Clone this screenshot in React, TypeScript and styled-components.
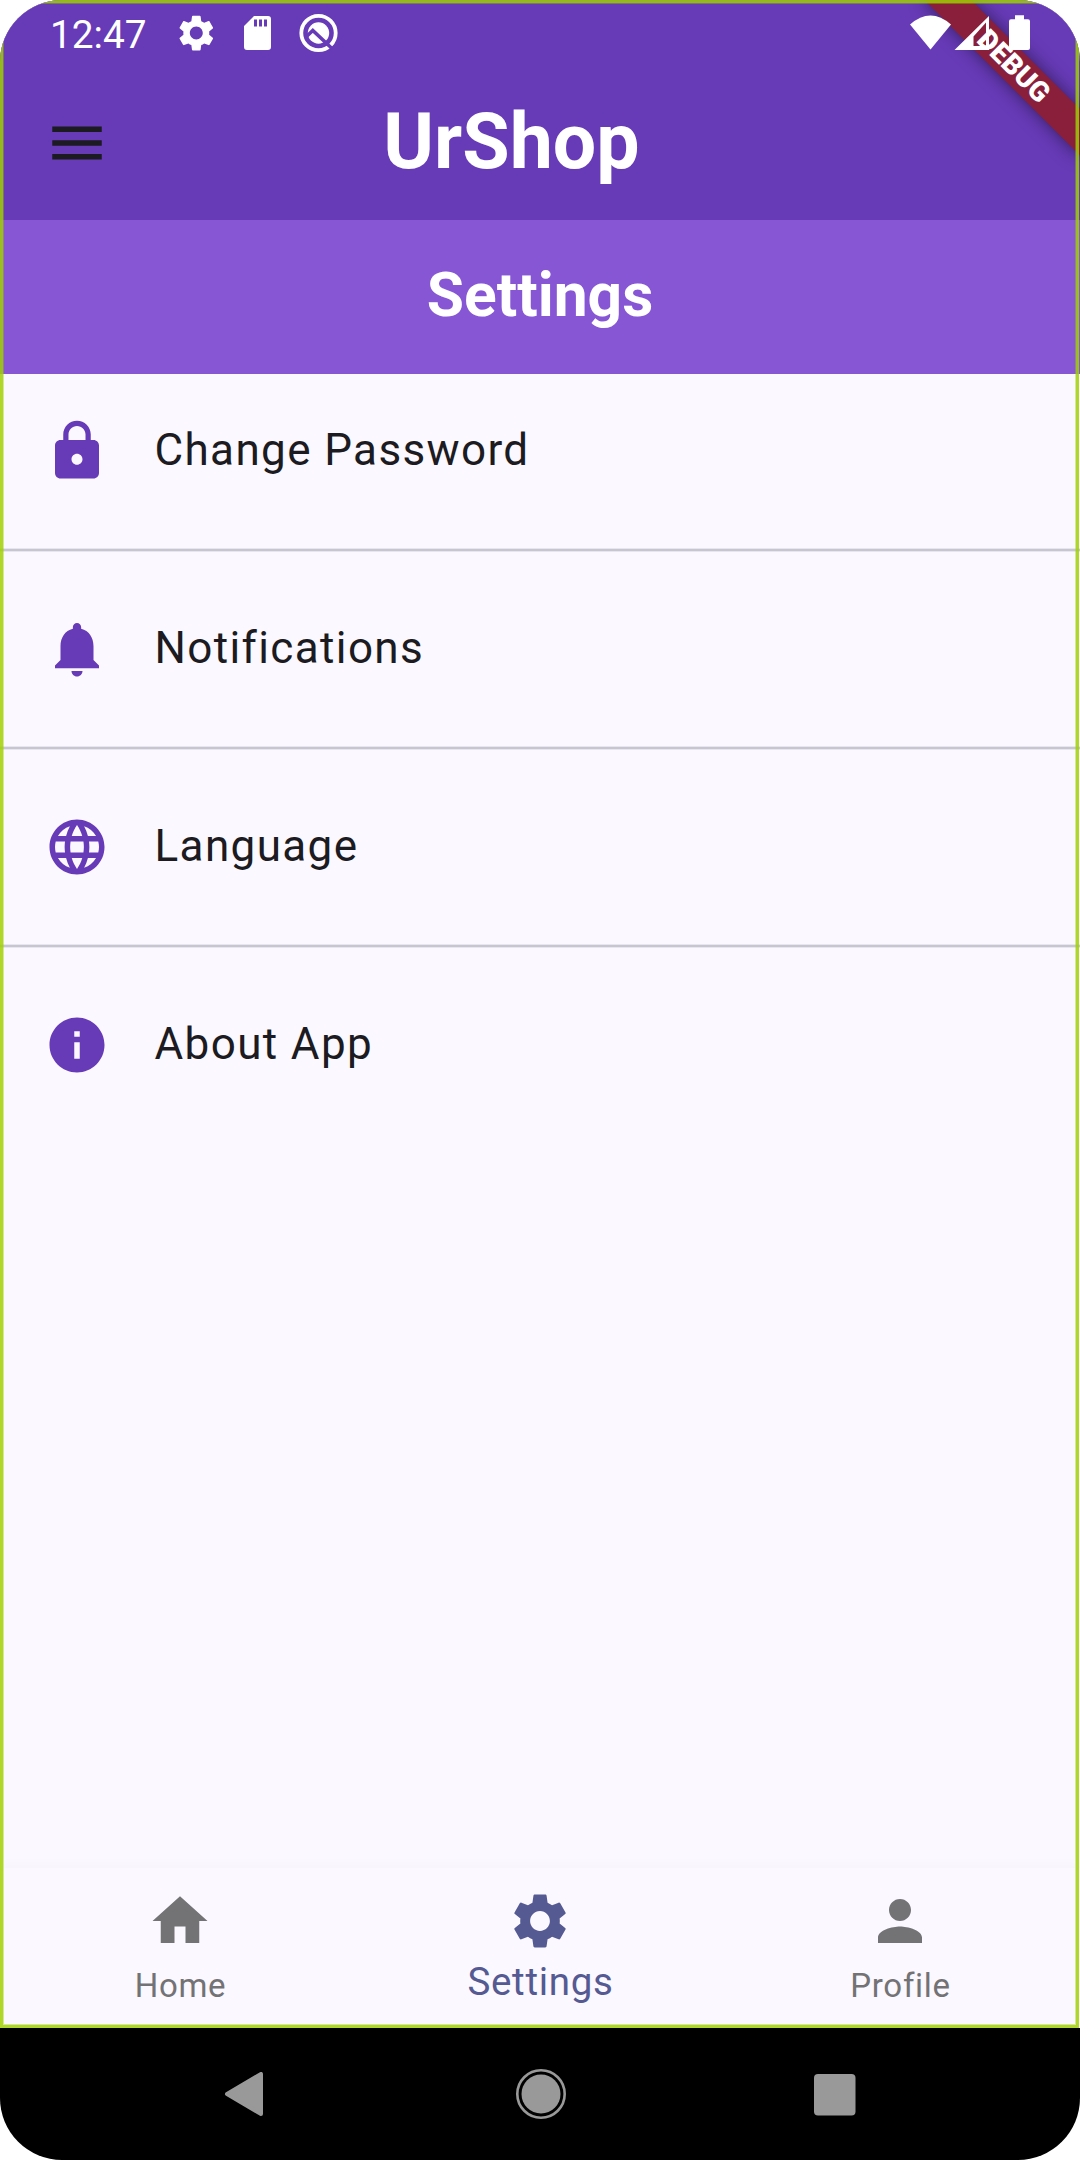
import React from 'react';
import styled, { createGlobalStyle } from 'styled-components';

const Global = createGlobalStyle`
  * { box-sizing: border-box; }
  html, body { margin: 0; background: #fff; }
  body { font-family: Roboto, "Liberation Sans", sans-serif; }
`;

const Device = styled.div`
  position: relative;
  width: 1080px;
  height: 2160px;
  overflow: hidden;
  border-radius: 62px;
  background: #000;
  display: flex;
  flex-direction: column;
`;

const AppSurface = styled.div`
  position: relative;
  height: 2028px;
  overflow: hidden;
  display: flex;
  flex-direction: column;
  background: #fbf8ff;
`;

const FocusOutline = styled.div`
  position: absolute;
  z-index: 3;
  inset: 0 1px 0 0;
  border: 3px solid rgba(158, 208, 0, 0.84);
  box-shadow: inset 0 0 0 1px rgba(158, 208, 0, 0.4);
  pointer-events: none;
`;

const StatusBar = styled.div`
  height: 66px;
  padding: 0 48px 0 50px;
  display: flex;
  align-items: center;
  justify-content: space-between;
  background: #673ab7;
  color: #fff;
`;

const StatusGroup = styled.div`
  position: relative;
  z-index: 2;
  display: flex;
  align-items: center;
`;

const Clock = styled.span`
  width: 125px;
  font-size: 38.8px;
  line-height: 66px;
  padding-top: 3px;
`;

const AppBar = styled.header`
  height: 154px;
  padding: 0 44px;
  display: flex;
  align-items: center;
  background: #673ab7;
`;

const AppTitle = styled.h1`
  flex: 1;
  margin: 0 123px 2px 0;
  text-align: center;
  color: #fff;
  font-size: 77px;
  font-weight: 700;
  line-height: 90px;
`;

const SectionHeader = styled.h2`
  margin: 0;
  height: 154px;
  padding-bottom: 3px;
  display: flex;
  align-items: center;
  justify-content: center;
  background: #8756d5;
  color: #fff;
  font-size: 60.5px;
  font-weight: 700;
`;

const List = styled.ul`
  flex: 1;
  margin: 0;
  padding: 0;
  list-style: none;
`;

const ListRow = styled.li`
  height: 154px;
  padding: 0 44px;
  display: flex;
  align-items: center;
  gap: 44.5px;
  color: #1b1b21;
  font-size: 44px;
  line-height: 66px;
  letter-spacing: 1.375px;
`;

const RowLabel = styled.span`
  padding-bottom: 2px;
`;

const Divider = styled.li`
  height: 44px;
  display: flex;
  align-items: center;
  &::before {
    content: '';
    flex: 1;
    height: 2px;
    background: #c7c5d0;
    box-shadow: 0 0 0 1px rgba(199, 197, 208, 0.38);
  }
`;

const BottomBar = styled.nav`
  height: 160px;
  display: grid;
  grid-template-columns: repeat(3, 1fr);
  background: #fbf8ff;
  box-shadow: 0 -3px 12px rgba(0, 0, 0, 0.025);
`;

const Tab = styled.div<{ $active?: boolean }>`
  display: flex;
  flex-direction: column;
  align-items: center;
  padding-top: 20px;
  color: ${(p) => (p.$active ? '#555a92' : '#737376')};
  font-size: ${(p) => (p.$active ? 38.5 : 33)}px;
  letter-spacing: 0.69px;
`;

const TabLabel = styled.span<{ $active?: boolean }>`
  line-height: ${(p) => (p.$active ? 56 : 64)}px;
  padding-left: 1px;
`;

const SystemBar = styled.div`
  height: 132px;
  display: flex;
  align-items: center;
  justify-content: space-between;
  padding: 0 215px 0 224px;
`;

const BannerCorner = styled.div`
  position: absolute;
  z-index: 1;
  top: 0;
  right: 0;
  width: 0;
  height: 0;
  transform: rotate(45deg);
`;

const DebugBanner = styled.div`
  position: absolute;
  left: -110px;
  top: 77px;
  width: 220px;
  height: 33px;
  background: #8a1f3b;
  box-shadow: 0 0 17px rgba(0, 0, 0, 0.5);
  color: #fff;
  font-size: 28px;
  font-weight: 900;
  line-height: 33px;
  text-align: center;
`;

const Glyph = styled.svg<{ $size?: number }>`
  display: block;
  flex: none;
  width: ${(p) => p.$size ?? 66}px;
  height: ${(p) => p.$size ?? 66}px;
  fill: currentColor;
`;

const paths = {
  menu: 'M3 18h18v-2H3v2zm0-5h18v-2H3v2zm0-7v2h18V6H3z',
  lock: 'M18 8h-1V6c0-2.76-2.24-5-5-5S7 3.24 7 6v2H6c-1.1 0-2 .9-2 2v10c0 1.1.9 2 2 2h12c1.1 0 2-.9 2-2V10c0-1.1-.9-2-2-2zm-6 9c-1.1 0-2-.9-2-2s.9-2 2-2 2 .9 2 2-.9 2-2 2zm3.1-9H8.9V6c0-1.71 1.39-3.1 3.1-3.1 1.71 0 3.1 1.39 3.1 3.1v2z',
  bell: 'M12 22c1.1 0 2-.9 2-2h-4c0 1.1.89 2 2 2zm6-6v-5c0-3.07-1.64-5.64-4.5-6.32V4c0-.83-.67-1.5-1.5-1.5s-1.5.67-1.5 1.5v.68C7.63 5.36 6 7.92 6 11v5l-2 2v1h16v-1l-2-2z',
  globe:
    'M11.99 2C6.47 2 2 6.48 2 12s4.47 10 9.99 10C17.52 22 22 17.52 22 12S17.52 2 11.99 2zm6.93 6h-2.95c-.32-1.25-.78-2.45-1.38-3.56 1.84.63 3.37 1.91 4.33 3.56zM12 4.04c.83 1.2 1.48 2.53 1.91 3.96h-3.82c.43-1.43 1.08-2.76 1.91-3.96zM4.26 14C4.1 13.36 4 12.69 4 12s.1-1.36.26-2h3.38c-.08.66-.14 1.32-.14 2s.06 1.34.14 2H4.26zm.82 2h2.95c.32 1.25.78 2.45 1.38 3.56-1.84-.63-3.37-1.9-4.33-3.56zm2.95-8H5.08c.96-1.66 2.49-2.93 4.33-3.56C8.81 5.55 8.35 6.75 8.03 8zM12 19.96c-.83-1.2-1.48-2.53-1.91-3.96h3.82c-.43 1.43-1.08 2.76-1.91 3.96zM14.34 14H9.66c-.09-.66-.16-1.32-.16-2s.07-1.35.16-2h4.68c.09.65.16 1.32.16 2s-.07 1.34-.16 2zm.25 5.56c.6-1.11 1.06-2.31 1.38-3.56h2.95c-.96 1.65-2.49 2.93-4.33 3.56zM16.36 14c.08-.66.14-1.32.14-2s-.06-1.34-.14-2h3.38c.16.64.26 1.31.26 2s-.1 1.36-.26 2h-3.38z',
  info: 'M12 2C6.48 2 2 6.48 2 12s4.48 10 10 10 10-4.48 10-10S17.52 2 12 2zm1 15h-2v-6h2v6zm0-8h-2V7h2v2z',
  home: 'M10 20v-6h4v6h5v-8h3L12 3 2 12h3v8z',
  person:
    'M12 12c2.21 0 4-1.79 4-4s-1.79-4-4-4-4 1.79-4 4 1.79 4 4 4zm0 2c-2.67 0-8 1.34-8 4v2h16v-2c0-2.66-5.33-4-8-4z',
  settings:
    'M19.14 12.94c.04-.3.06-.61.06-.94 0-.32-.02-.64-.07-.94l2.03-1.58c.18-.14.23-.41.12-.61l-1.92-3.32c-.12-.22-.37-.29-.59-.22l-2.39.96c-.5-.38-1.03-.7-1.62-.94l-.36-2.54c-.04-.24-.24-.41-.48-.41h-3.84c-.24 0-.43.17-.47.41l-.36 2.54c-.59.24-1.13.57-1.62.94l-2.39-.96c-.22-.08-.47 0-.59.22L2.74 8.87c-.12.21-.08.47.12.61l2.03 1.58c-.05.3-.09.63-.09.94s.02.64.07.94l-2.03 1.58c-.18.14-.23.41-.12.61l1.92 3.32c.12.22.37.29.59.22l2.39-.96c.5.38 1.03.7 1.62.94l.36 2.54c.05.24.24.41.48.41h3.84c.24 0 .44-.17.47-.41l.36-2.54c.59-.24 1.13-.56 1.62-.94l2.39.96c.22.08.47 0 .59-.22l1.92-3.32c.12-.22.07-.47-.12-.61l-2.01-1.58zM12 15.6c-1.98 0-3.6-1.62-3.6-3.6s1.62-3.6 3.6-3.6 3.6 1.62 3.6 3.6-1.62 3.6-3.6 3.6z',
};

type IconName = keyof typeof paths;

const Icon = ({ name, color }: { name: IconName; color?: string }) => (
  <Glyph viewBox="0 0 24 24" color={color}>
    <path d={paths[name]} />
  </Glyph>
);

const rows: { icon: IconName; label: string }[] = [
  { icon: 'lock', label: 'Change Password' },
  { icon: 'bell', label: 'Notifications' },
  { icon: 'globe', label: 'Language' },
  { icon: 'info', label: 'About App' },
];

const tabs: { icon: IconName; label: string; active?: boolean }[] = [
  { icon: 'home', label: 'Home' },
  { icon: 'settings', label: 'Settings', active: true },
  { icon: 'person', label: 'Profile' },
];

const NotificationIcons = () => (
  <svg width="164" height="50" viewBox="175 8 164 50" fill="#fff">
    <g transform="translate(174.7 11.5) scale(1.8)">
      <path d={paths.settings} />
    </g>
    <path
      fillRule="evenodd"
      d="M254 16h14q3 0 3 3v28q0 3-3 3h-21q-3 0-3-3V26zM254 19.500v7h3v-7zM259 19.500v7h3v-7zM264 19.500v7h3v-7z"
    />
    <circle cx="318.500" cy="33" r="17.200" fill="none" stroke="#fff" strokeWidth="3.800" />
    <circle cx="318.500" cy="33" r="10.700" />
    <path d="M306 37L312.800 30.500L332 48.500" fill="none" stroke="#673ab7" strokeWidth="3.500" />
  </svg>
);

const SignalIcons = () => (
  <svg width="122" height="50" viewBox="910 8 122 50" fill="#fff">
    <path d="M910 24.500Q930.500 6.500 951 24.500L930.500 49.500z" />
    <path fillRule="evenodd" d="M954.500 50L989 16v34zM973.500 46h12.500V22.500L973.500 36.500z" />
    <path d="M1015 15.300h9v4h4q2 0 2 2V48q0 2-2 2h-17q-2 0-2-2V21.300q0-2 2-2h4z" />
  </svg>
);

export default function App() {
  return (
    <>
      <Global />
      <Device>
        <AppSurface>
          <StatusBar>
            <StatusGroup>
              <Clock>12:47</Clock>
              <NotificationIcons />
            </StatusGroup>
            <StatusGroup>
              <SignalIcons />
            </StatusGroup>
          </StatusBar>
          <AppBar>
            <Icon name="menu" color="#1b1b21" />
            <AppTitle>UrShop</AppTitle>
          </AppBar>
          <SectionHeader>Settings</SectionHeader>
          <List>
            {rows.map((row, i) => (
              <React.Fragment key={row.label}>
                {i > 0 && <Divider />}
                <ListRow>
                  <Icon name={row.icon} color="#673ab7" />
                  <RowLabel>{row.label}</RowLabel>
                </ListRow>
              </React.Fragment>
            ))}
          </List>
          <BottomBar>
            {tabs.map((tab) => (
              <Tab key={tab.label} $active={tab.active}>
                <Icon name={tab.icon} />
                <TabLabel $active={tab.active}>{tab.label}</TabLabel>
              </Tab>
            ))}
          </BottomBar>
          <BannerCorner>
            <DebugBanner>DEBUG</DebugBanner>
          </BannerCorner>
          <FocusOutline />
        </AppSurface>
        <SystemBar>
          <Glyph viewBox="0 4 44 44" $size={44} color="#999">
            <path d="M3 26L37 6v40z" stroke="#999" strokeWidth="4" strokeLinejoin="round" />
          </Glyph>
          <Glyph viewBox="0 0 52 52" $size={52} color="#999">
            <circle cx="26" cy="26" r="19.500" />
            <circle cx="26" cy="26" r="23.700" fill="none" stroke="#999" strokeWidth="2.600" />
          </Glyph>
          <Glyph viewBox="0 0 52 52" $size={52} color="#999">
            <rect width="41.500" height="41.500" x="1" y="6" rx="4" />
          </Glyph>
        </SystemBar>
      </Device>
    </>
  );
}
